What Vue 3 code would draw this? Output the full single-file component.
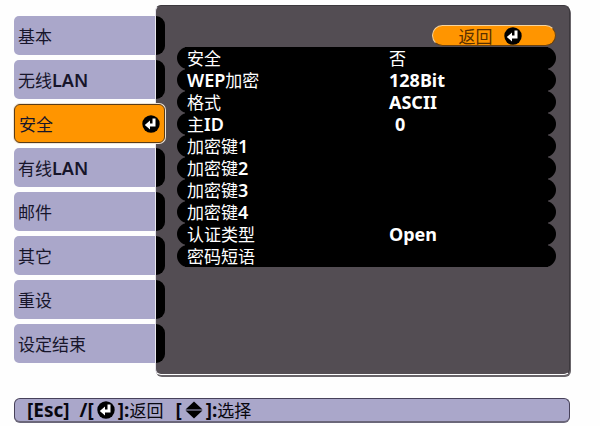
<script setup>
import { ref } from 'vue'

const tabs = ['基本', '无线LAN', '安全', '有线LAN', '邮件', '其它', '重设', '设定结束']
const active = ref('安全')

const rows = [
  { label: '安全', value: '否' },
  { label: 'WEP加密', value: '128Bit' },
  { label: '格式', value: 'ASCII' },
  { label: '主ID', value: '0', indent: true },
  { label: '加密键1', value: '' },
  { label: '加密键2', value: '' },
  { label: '加密键3', value: '' },
  { label: '加密键4', value: '' },
  { label: '认证类型', value: 'Open' },
  { label: '密码短语', value: '' },
]

// Latin runs are set heavier than the Chinese text beside them.
const runs = (text) =>
  (text.match(/[\x20-\x7e]+|[^\x20-\x7e]+/g) || []).map((t) => ({ t, latin: /^[\x20-\x7e]/.test(t) }))
</script>

<template>
  <main class="screen">
    <div class="menu">
      <nav class="tabs">
        <button
          v-for="tab in tabs"
          :key="tab"
          type="button"
          class="tab"
          :class="{ active: tab === active }"
          @click="active = tab"
        >
          <span class="text"><span v-for="(r, i) in runs(tab)" :key="i" :class="{ latin: r.latin }">{{ r.t }}</span></span>
          <svg v-if="tab === active" class="enter" viewBox="0 0 18 18" aria-hidden="true">
            <circle cx="9" cy="9" r="8.7" />
            <path d="M10.5 3.5h3v8H8v3L2.8 10 8 5.5v3h2.5z" />
          </svg>
        </button>
      </nav>

      <section class="panel">
        <button type="button" class="back">
          <span>返回</span>
          <svg class="enter" viewBox="0 0 18 18" aria-hidden="true">
            <circle cx="9" cy="9" r="8.7" />
            <path d="M10.5 3.5h3v8H8v3L2.8 10 8 5.5v3h2.5z" />
          </svg>
        </button>
        <dl class="rows">
          <div v-for="row in rows" :key="row.label" class="row">
            <dt class="text"><span v-for="(r, i) in runs(row.label)" :key="i" :class="{ latin: r.latin }">{{ r.t }}</span></dt>
            <dd class="text" :class="{ indent: row.indent }"><span v-for="(r, i) in runs(row.value)" :key="i" :class="{ latin: r.latin }">{{ r.t }}</span></dd>
          </div>
        </dl>
      </section>
    </div>

    <footer class="help">
      <span class="latin">[Esc]</span>
      <span class="group">
        <span class="latin">/[</span>
        <svg class="enter" viewBox="0 0 18 18" aria-hidden="true">
          <circle cx="9" cy="9" r="8.7" />
          <path d="M10.5 3.5h3v8H8v3L2.8 10 8 5.5v3h2.5z" />
        </svg>
        <span class="latin">]:</span><span>返回</span>
      </span>
      <span class="group last">
        <span class="latin">[</span>
        <svg class="updown" viewBox="0 0 18 18" aria-hidden="true">
          <path d="M9 0.5l8.5 8H.5zM9 17.5l8.5-8H.5z" />
        </svg>
        <span class="latin">]:</span><span>选择</span>
      </span>
    </footer>
  </main>
</template>

<style>
body {
  margin: 0;
  background: #fefefe;
}
</style>

<style scoped>
.screen {
  padding: 5px 30px 0 14px;
  font-family: 'Noto Sans CJK SC', 'Noto Sans', sans-serif;
  font-size: 17px;
  line-height: 20px;
  color: #17152a;
}
button {
  font: inherit;
  color: inherit;
  margin: 0;
  cursor: pointer;
}
.text {
  display: flex;
  align-items: center;
}
.latin {
  font-family: 'Noto Sans', sans-serif;
  font-size: 18px;
  font-weight: 600;
}
.enter {
  flex: none;
  width: 18px;
  height: 18px;
  fill: #000;
}
.enter path {
  fill: #fff;
}
.menu {
  display: grid;
  grid-template-columns: 151px 1fr;
}
.tabs {
  z-index: 1;
  display: flex;
  flex-direction: column;
  gap: 5px;
  padding: 11px 0 12px;
}
.tab {
  display: flex;
  align-items: center;
  justify-content: space-between;
  height: 39px;
  padding: 0 4px;
  border: 0;
  border-radius: 5px 9px 9px 5px;
  background: linear-gradient(to right, #aaa7ca 141px, #e8e6ee 141px, #e8e6ee 142px, #000 142px);
}
.tab.active {
  border: 1px solid #5a3c18;
  border-radius: 6px;
  background: #ff9500;
  box-shadow: 0 0 0 1px #eee4d8;
}
.panel {
  margin-left: -10px;
  padding: 19px 13px 0 21px;
  border: 1px solid #3c383d;
  border-left-color: #e8e6ee;
  border-bottom-color: #fff;
  border-radius: 6px;
  background: #534d53;
  box-shadow: 1px 2px 0 #69656a;
}
.back {
  display: flex;
  align-items: center;
  justify-content: center;
  gap: 11px;
  width: 124px;
  height: 21px;
  margin-left: auto;
  padding: 0 8px 0 0;
  border: 1px solid #f7d49c;
  border-right-color: #6b4210;
  border-bottom-color: #6b4210;
  border-radius: 11px;
  background: #ff9500;
  color: #593000;
}
.rows {
  margin: 1px 0 0;
  color: #fff;
}
.row {
  position: relative;
  display: grid;
  grid-template-columns: 202px 1fr;
  height: 22px;
  padding-left: 10px;
  border-radius: 11px;
  background: #000;
}
.row::before {
  content: '';
  position: absolute;
  inset: 0 8px;
  background: #000;
}
.row dt,
.row dd {
  position: relative;
  margin: 0;
  white-space: nowrap;
}
.row dd .latin {
  font-weight: 700;
}
.row .indent {
  padding-left: 6px;
}
.help {
  display: flex;
  align-items: center;
  height: 22px;
  margin-top: 23px;
  padding: 0 12px;
  border: 1px solid #47415a;
  border-bottom: 2px solid #6b677a;
  border-radius: 6px;
  background: #aaa7ca;
  color: #08070f;
  white-space: nowrap;
}
.help .latin {
  font-size: 19px;
  font-weight: 700;
}
.group {
  display: flex;
  align-items: center;
  margin-left: 10px;
}
.group.last {
  margin-left: 12px;
}
.group svg {
  margin: 0 3px;
}
.updown {
  width: 18px;
  height: 18px;
  fill: #000;
}
</style>
